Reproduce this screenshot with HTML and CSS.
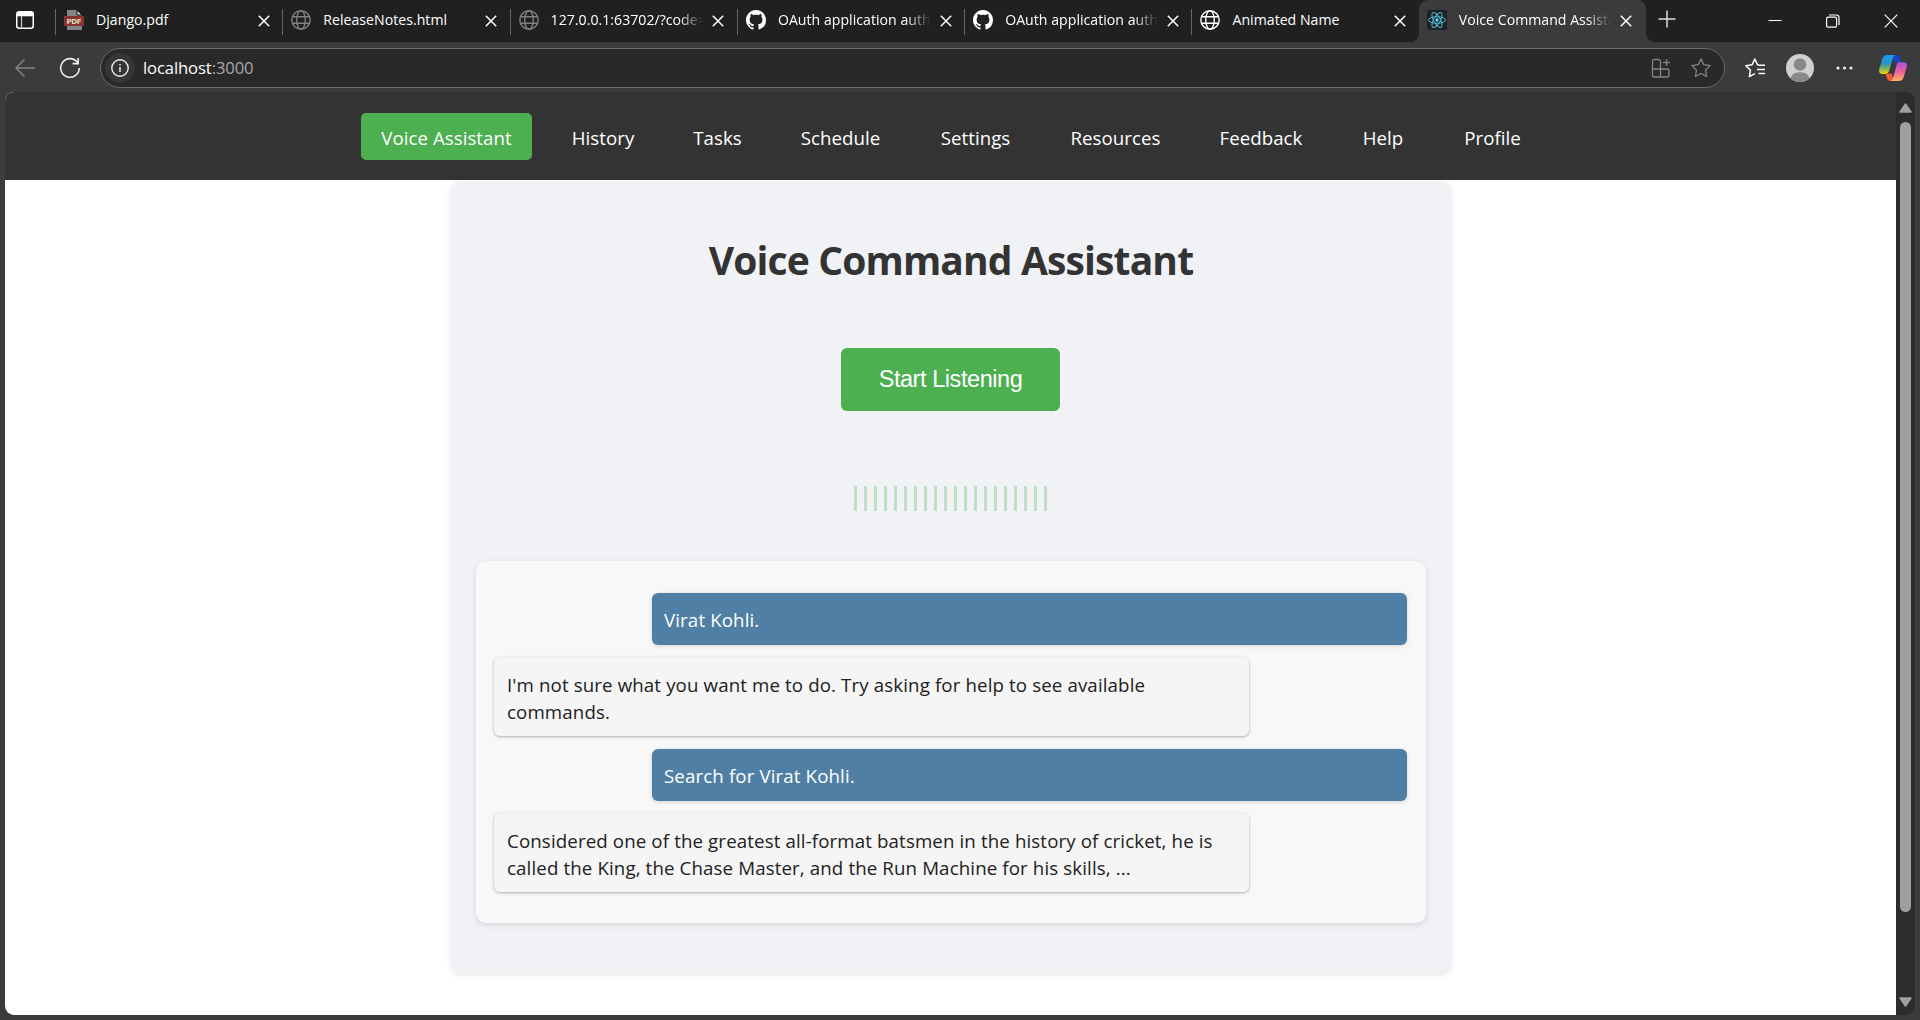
FILE: index.html
```html
<!DOCTYPE html>
<html lang="en">
<head>
<meta charset="utf-8">
<title>Voice Command Assistant</title>
<link rel="stylesheet" href="styles.css">
</head>
<body>
<svg class="defs" width="0" height="0">
  <symbol id="x" viewBox="0 0 12 12"><path d="M.8.8l10.4 10.4M11.200.8L.8 11.200" fill="none" stroke="currentColor" stroke-width="1.5"/></symbol>
  <symbol id="globe" viewBox="0 0 20 20"><g fill="none" stroke="currentColor" stroke-width="1.4"><circle cx="10" cy="10" r="9.200"/><ellipse cx="10" cy="10" rx="4.300" ry="9.200"/><path d="M1.700 6.700h16.600M1.700 13.300h16.600"/></g></symbol>
  <symbol id="github" viewBox="0 0 16 16"><path fill="currentColor" d="M8 0C3.580 0 0 3.580 0 8c0 3.540 2.290 6.530 5.470 7.590.4.070.55-.17.55-.38 0-.19-.01-.82-.01-1.490-2.010.37-2.530-.49-2.690-.94-.09-.23-.48-.94-.82-1.130-.28-.15-.68-.52-.01-.53.63-.01 1.080.58 1.230.82.72 1.210 1.870.87 2.330.66.07-.52.28-.87.51-1.070-1.780-.2-3.640-.89-3.640-3.950 0-.87.31-1.590.82-2.150-.08-.2-.36-1.020.08-2.120 0 0 .67-.21 2.200.82.64-.18 1.320-.27 2-.27s1.360.09 2 .27c1.530-1.040 2.200-.82 2.200-.82.44 1.100.16 1.920.08 2.120.51.56.82 1.270.82 2.150 0 3.070-1.870 3.750-3.650 3.950.29.25.54.73.54 1.480 0 1.070-.01 1.930-.01 2.200 0 .21.15.46.55.38A8.010 8.010 0 0 0 16 8c0-4.420-3.580-8-8-8z"/></symbol>
</svg>
<div class="browser">
  <header class="tabstrip">
    <div class="workspace"><svg width="18" height="18" viewBox="0 0 18 18"><rect x=".75" y=".75" width="16.500" height="16.500" rx="2.500" fill="none" stroke="#fff" stroke-width="1.500"/><path d="M1 1h16v4.300H1z" fill="#fff"/><path d="M5.500 5v12" stroke="#ccc" stroke-width="1.200"/></svg></div>
    <div class="tab">
      <svg class="favicon" viewBox="0 0 20 20"><path d="M3 0h10l5 5v15H3z" fill="#858585"/><path d="M13 0l5 5h-5z" fill="#ddd" stroke="#111" stroke-width="1"/><path d="M0 6h20v10H0z" fill="#863334"/><text class="pdf" x="10" y="13.800" text-anchor="middle" textLength="15">PDF</text></svg>
      <span class="title">Django.pdf</span><svg class="close"><use href="#x"/></svg>
    </div>
    <div class="tab"><svg class="favicon muted"><use href="#globe"/></svg><span class="title">ReleaseNotes.html</span><svg class="close"><use href="#x"/></svg></div>
    <div class="tab"><svg class="favicon muted"><use href="#globe"/></svg><span class="title long">127.0.0.1:63702/?code=</span><svg class="close"><use href="#x"/></svg></div>
    <div class="tab"><svg class="favicon"><use href="#github"/></svg><span class="title long">OAuth application authorized</span><svg class="close"><use href="#x"/></svg></div>
    <div class="tab"><svg class="favicon"><use href="#github"/></svg><span class="title long">OAuth application authorized</span><svg class="close"><use href="#x"/></svg></div>
    <div class="tab"><svg class="favicon"><use href="#globe"/></svg><span class="title">Animated Name</span><svg class="close"><use href="#x"/></svg></div>
    <div class="tab active">
      <svg class="favicon" viewBox="0 0 20 20"><rect width="20" height="20" rx="2" fill="#202124"/><g fill="none" stroke="#4fb8d3" stroke-width="1"><ellipse cx="10" cy="10" rx="8.500" ry="3.300"/><ellipse cx="10" cy="10" rx="8.500" ry="3.300" transform="rotate(60 10 10)"/><ellipse cx="10" cy="10" rx="8.500" ry="3.300" transform="rotate(120 10 10)"/></g><circle cx="10" cy="10" r="1.700" fill="#61dafb"/></svg>
      <span class="title long">Voice Command Assistant</span><svg class="close"><use href="#x"/></svg>
    </div>
    <svg class="newtab" width="18" height="18" viewBox="0 0 18 18"><path d="M9 .5v17M.5 9h17" stroke="#ddd" stroke-width="1.500"/></svg>
    <div class="window-controls">
      <svg width="14" height="14" viewBox="0 0 14 14"><path d="M.5 6.500h13" stroke="#fff"/></svg>
      <svg width="14" height="14" viewBox="0 0 14 14" fill="none" stroke="#fff" stroke-width="1.200"><rect x=".6" y="3.200" width="10" height="10" rx="1.500"/><path d="M3 1h7.500a2.500 2.500 0 0 1 2.500 2.500V11"/></svg>
      <svg width="14" height="14" viewBox="0 0 14 14"><path d="M.7.7l12.600 12.600M13.300.7L.7 13.300" stroke="#fff" stroke-width="1.200"/></svg>
    </div>
  </header>
  <div class="toolbar">
    <svg class="back" width="20" height="18" viewBox="0 0 20 18" fill="none" stroke="#858585" stroke-width="1.400"><path d="M20 9H1M9.500.5L1 9l8.500 8.500"/></svg>
    <svg class="reload" width="22" height="22" viewBox="0 0 22 22" fill="none" stroke="#eee" stroke-width="1.600"><path d="M19 6.200A9.300 9.300 0 1 0 20.300 11M19.200 1v5.600h-5.600"/></svg>
    <div class="address">
      <span class="info"><svg width="18" height="18" viewBox="0 0 18 18"><circle cx="9" cy="9" r="8.200" fill="none" stroke="#eee" stroke-width="1.400"/><path d="M9 8v5M9 5v1.600" stroke="#eee" stroke-width="1.500"/></svg></span>
      <span class="url">localhost<span>:3000</span></span>
      <svg class="apps" width="20" height="20" viewBox="0 0 20 20" fill="none" stroke="#858585" stroke-width="1.300"><path d="M9.500 19V3.500a2 2 0 0 0-2-2h-4a2 2 0 0 0-2 2V17a2 2 0 0 0 2 2H16a2 2 0 0 0 2-2v-4a2 2 0 0 0-2-2H1.500M15.500 1v7M12 4.500h7"/></svg>
      <svg width="20" height="20" viewBox="0 0 20 20" fill="none" stroke="#858585" stroke-width="1.300" stroke-linejoin="round"><path d="M10 .9l2.800 5.800 6.300.9-4.600 4.500 1.100 6.400-5.600-3-5.600 3 1.100-6.400L.9 7.600l6.300-.9z"/></svg>
    </div>
    <div class="actions">
      <svg width="21" height="20" viewBox="0 0 21 20" fill="none" stroke="#fff" stroke-width="1.500" stroke-linejoin="round"><path d="M14.500 7.200l-2-.4L9.800 1 7 6.800.8 7.700l4.600 4.400-1 6.500 5.500-3M13.500 7.300H20M12 11.500h8M13.500 15.500H20"/></svg>
      <svg class="avatar" width="28" height="28" viewBox="0 0 28 28"><circle cx="14" cy="14" r="14" fill="#d2d0ce"/><circle cx="14" cy="10.500" r="6.200" fill="#8a8886"/><path d="M4.500 24.200c1-4 4.700-6 9.500-6s8.500 2 9.500 6A14 14 0 0 1 14 28a14 14 0 0 1-9.500-3.800z" fill="#8a8886"/></svg>
      <svg class="more" width="18" height="4" viewBox="0 0 18 4" fill="#eee"><circle cx="2" cy="2" r="1.600"/><circle cx="8.500" cy="2" r="1.600"/><circle cx="15" cy="2" r="1.600"/></svg>
      <svg class="copilot" width="28" height="26" viewBox="0 0 28 26">
        <defs>
          <linearGradient id="ca" x1="0" y1="0" x2="0" y2="1"><stop offset="0" stop-color="#149cf0"/><stop offset=".45" stop-color="#2a91c8"/><stop offset=".7" stop-color="#72b65b"/><stop offset="1" stop-color="#f8cf14"/></linearGradient>
          <linearGradient id="cb" x1="0" y1="0" x2="0" y2="1"><stop offset="0" stop-color="#a951ea"/><stop offset=".5" stop-color="#ee6098"/><stop offset="1" stop-color="#ffb461"/></linearGradient>
        </defs>
        <path d="M13 0h4.500c2.400 0 2.900 1.600 3.600 4.300l.8 3.200h-5.600z" fill="#1746cf"/>
        <path d="M6.500 18.500h6.200l2 7.500h-3.500c-2.200 0-3-1.600-3.600-3.800z" fill="#f05a34"/>
        <path d="M8.500 0h8.200c-1.800.5-2.500 2.100-3.100 4.200l-3.300 11c-.8 2.700-1.900 3.700-4.300 3.700H3.500C.5 18.900-.4 17 .3 14L3.200 4.300C4.100 1.300 5.700 0 8.500 0z" fill="url(#ca)"/>
        <path d="M19.500 7.300h5c3 0 3.900 1.900 3.200 4.700l-2.900 9.700c-.9 3-2.500 4.300-5.300 4.300h-8.200c1.800-.5 2.500-2.100 3.100-4.200l3-10.800c.4-1.700.7-2.800 2.100-3.700z" fill="url(#cb)"/>
      </svg>
    </div>
  </div>
  <div class="viewport">
    <main class="page">
      <nav class="nav">
        <a class="on w1">Voice Assistant</a><a class="w2">History</a><a class="w3">Tasks</a><a class="w4">Schedule</a><a class="w5">Settings</a><a class="w6">Resources</a><a class="w7">Feedback</a><a class="w8">Help</a><a class="w9">Profile</a>
      </nav>
      <section class="assistant">
        <h1>Voice Command Assistant</h1>
        <button class="listen">Start Listening</button>
        <div class="wave"><i></i><i></i><i></i><i></i><i></i><i></i><i></i><i></i><i></i><i></i><i></i><i></i><i></i><i></i><i></i><i></i><i></i><i></i><i></i><i></i></div>
        <div class="chat">
          <p class="msg user">Virat Kohli.</p>
          <p class="msg bot">I'm not sure what you want me to do. Try asking for help to see available<br>commands.</p>
          <p class="msg user">Search for Virat Kohli.</p>
          <p class="msg bot">Considered one of the greatest all-format batsmen in the history of cricket, he is<br>called the King, the Chase Master, and the Run Machine for his skills, ...</p>
        </div>
      </section>
    </main>
    <div class="scrollbar">
      <svg width="13" height="10" viewBox="0 0 13 10"><path d="M6.500 1L12 9H1z" fill="#9f9f9f" stroke="#9f9f9f" stroke-width="1.500" stroke-linejoin="round"/></svg>
      <div class="thumb"></div>
      <svg class="down" width="13" height="10" viewBox="0 0 13 10"><path d="M6.500 9L12 1H1z" fill="#9f9f9f" stroke="#9f9f9f" stroke-width="1.500" stroke-linejoin="round"/></svg>
    </div>
  </div>
</div>
</body>
</html>
```
FILE: styles.css
```css
* { box-sizing: border-box; }
body { margin: 0; font-family: "Open Sans", "Noto Sans", sans-serif; overflow: hidden; }
svg { display: block; flex: none; }
.defs { position: absolute; }
.browser { width: 1920px; height: 1020px; background: #3b3b3b; display: flex; flex-direction: column; }

.tabstrip { height: 42px; background: #202020; display: flex; flex: none; color: #fff; }
.workspace { width: 55px; padding: 11px 0 0 16px; flex: none; }
.tab { width: 227.300px; height: 42px; flex: none; display: flex; align-items: flex-start; padding: 10px 12.500px 0 9px; background: linear-gradient(#666, #666) 0 9px / 1px 26px no-repeat; }
.favicon { width: 20px; height: 20px; }
.muted { color: #808080; }
.pdf { font: bold 7px "DejaVu Sans", sans-serif; fill: #ddb; }
.title { margin-left: 12px; flex: 1; min-width: 0; overflow: hidden; white-space: nowrap; font-size: 14.1px; letter-spacing: .03px; line-height: 20px; }
.title.long { margin-right: 9px; -webkit-mask-image: linear-gradient(90deg, #000 84%, transparent); mask-image: linear-gradient(90deg, #000 84%, transparent); }
.close { width: 12px; height: 12px; margin-top: 4.500px; }
.tab.active { position: relative; background: #3b3b3b; border-radius: 9px 9px 0 0; padding-left: 8px; padding-right: 14px; }
.tab.active::before, .tab.active::after { content: ""; position: absolute; bottom: 0; width: 8px; height: 8px; }
.tab.active::before { left: -8px; background: radial-gradient(circle at 0 0, #202020 7.500px, #3b3b3b 8px); }
.tab.active::after { right: -8px; background: radial-gradient(circle at 100% 0, #202020 7.500px, #3b3b3b 8px); }
.newtab { margin: 10px 0 0 12px; }
.window-controls { display: flex; gap: 44px; margin-left: auto; padding: 14px 22px 0 0; }

.toolbar { height: 50px; flex: none; display: flex; align-items: center; padding: 1px 13px 0 15px; }
.toolbar > .reload { margin: 0 20px 0 24px; }
.address { width: 1625px; height: 40px; margin-left: -1px; flex: none; border: 1px solid #6c6c6c; border-radius: 20px; background: #292929; display: flex; align-items: center; padding: 0 13px 0 4px; }
.info { width: 30px; height: 30px; border-radius: 50%; background: #353535; display: grid; place-items: center; }
.url { flex: 1; margin-left: 8px; padding-bottom: 1px; font-size: 16.600px; letter-spacing: -.1px; color: #fff; }
.url span { color: #a8a8a8; }
.apps { margin-right: 20px; }
.actions { flex: 1; display: flex; align-items: center; padding-left: 20px; }
.avatar { margin-left: 20px; }
.more { margin-left: 22px; }
.copilot { margin-left: auto; }

.viewport { width: 1910px; height: 923px; margin-left: 5px; display: flex; border-radius: 9px; overflow: hidden; flex: none; }
.page { width: 1891px; background: #fff; display: flex; flex-direction: column; align-items: center; }
.nav { width: 100%; height: 88px; background: #333; display: flex; gap: 20px; align-items: flex-start; padding: 21px 0 0 356px; flex: none; }
.nav a { height: 47px; line-height: 49px; border-radius: 5px; color: #fff; font-size: 18.700px; letter-spacing: .04px; text-align: center; white-space: nowrap; }
.nav .on { background: #4caf50; }
.w1 { width: 171px; } .w2 { width: 102px; } .w3 { width: 87px; } .w4 { width: 119px; } .w5 { width: 111px; }
.w6 { width: 129px; } .w7 { width: 122px; } .w8 { width: 82px; } .w9 { width: 97px; }

.assistant { width: 1000px; height: 792px; margin: 1px 0 0 1px; background: #f0f2f6; border-radius: 10px; box-shadow: 0 2px 6px rgba(0,0,0,.1); display: flex; flex-direction: column; align-items: center; flex: none; }
h1 { margin: 51px 0 0; height: 56px; line-height: 56px; font-size: 39px; font-weight: 700; letter-spacing: -.86px; color: #333; white-space: nowrap; }
.listen { margin: 60px 1px 0 0; width: 219px; height: 63px; border: 0; border-radius: 6px; background: #4caf50; color: #fff; font: 23.500px "Liberation Sans", sans-serif; letter-spacing: -.44px; padding: 0; }
.wave { margin: 75px 1px 0 0; display: flex; gap: 7px; height: 25px; }
.wave i { width: 3px; background: #bfdec4; }
.chat { margin-top: 50px; width: 950px; height: 362px; border-radius: 10px; background: #f8f8f8; box-shadow: 0 2px 6px rgba(0,0,0,.12); padding: 32px 19px 0 18px; display: flex; flex-direction: column; gap: 12px; }
.msg { margin: 0; width: 755px; padding: 13px 13px 12px; border-radius: 6px; font-size: 18.700px; letter-spacing: .125px; line-height: 27px; white-space: nowrap; color: #212121; box-shadow: 0 1px 3px rgba(0,0,0,.3); }
.user { align-self: flex-end; height: 52px; padding-left: 12px; background: #4f7fa4; color: #fff; box-shadow: 0 1px 4px rgba(0,0,0,.15); }
.bot { height: 79px; background: #f5f5f5; padding-top: 14px; margin-bottom: 1px; }

.scrollbar { width: 19px; background: #2c2c2c; display: flex; flex-direction: column; align-items: center; padding: 11px 0 8px; }
.thumb { width: 11px; height: 790px; border-radius: 6px; background: #9f9f9f; margin-top: 9px; }
.down { margin-top: auto; }
```
